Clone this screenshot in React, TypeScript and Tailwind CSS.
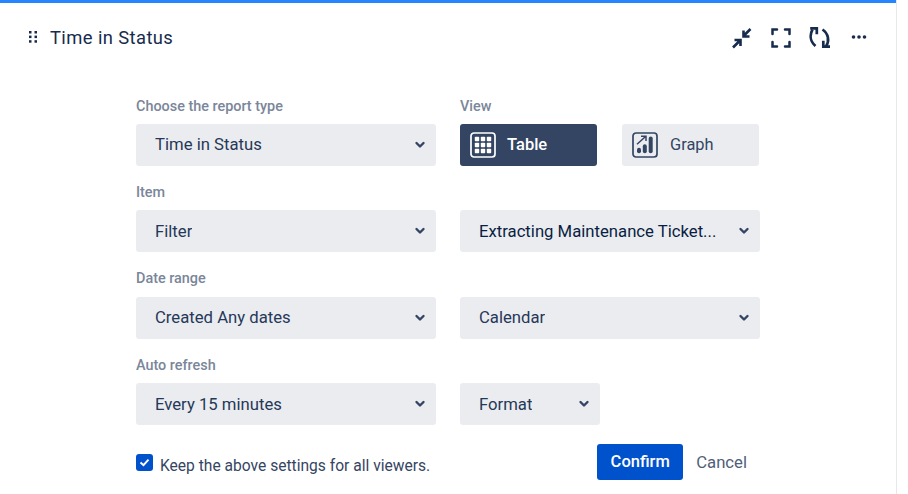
import React from 'react';

const ChevronIcon = () => (
  <svg width="12" height="8" viewBox="0 0 12 8" fill="none" className="shrink-0">
    <path d="M2.500 2l3.500 3.500L9.500 2" stroke="#344563" strokeWidth="2.400" strokeLinecap="round" strokeLinejoin="round" />
  </svg>
);

const SelectBox: React.FC<{ label: string; width: string; dark?: boolean; lifted?: boolean }> = ({ label, width, dark, lifted }) => (
  <div className={`${width} h-[42px] flex items-center justify-between bg-[#ebecf0] rounded-[3px] pl-[19px] pr-[10px]`}>
    <span className={`text-[16.7px] truncate ${lifted ? '' : 'pt-px'} ${dark ? 'text-[#091e42]' : 'text-[#253858]'}`}>{label}</span>
    <ChevronIcon />
  </div>
);

const Label: React.FC<{ children: React.ReactNode }> = ({ children }) => (
  <div className="h-[18px] mb-[9px] text-[14.4px] leading-[20px] font-medium text-[#7a869a]">{children}</div>
);

const DragHandle = () => (
  <svg width="10" height="14" viewBox="0 0 10 14" fill="#172b4d">
    <rect x="1" y="1" width="2.500" height="2.500" />
    <rect x="6.500" y="1" width="2.500" height="2.500" />
    <rect x="1" y="5.600" width="2.500" height="2.500" />
    <rect x="6.500" y="5.600" width="2.500" height="2.500" />
    <rect x="1" y="10.200" width="2.500" height="2.500" />
    <rect x="6.500" y="10.200" width="2.500" height="2.500" />
  </svg>
);

const CollapseIcon = () => (
  <svg width="22" height="22" viewBox="0 0 22 22" fill="none" stroke="#172b4d" strokeWidth="2.600">
    <path d="M19.500 2l-7 7M12.500 3.500v6h6" />
    <path d="M2 20.500l7-7M3.500 13h6v6" />
  </svg>
);

const FullscreenIcon = () => (
  <svg width="20" height="20" viewBox="0 0 20 20" fill="none" stroke="#172b4d" strokeWidth="2.500" strokeLinecap="round">
    <path d="M1.500 6V1.500H6M14 1.500h4.500V6M18.500 14v4.500H14M6 18.500H1.500V14" />
  </svg>
);

const RefreshIcon = () => (
  <svg width="22" height="22" viewBox="0 0 22 22" fill="none" stroke="#172b4d" strokeWidth="2.700">
    <path d="M6.500 19C1.200 14.500 0.500 8 3.500 2.500" />
    <path d="M1.200 1.300H7.800V7.200" />
    <path d="M13.500 2.500C19.300 6.500 20.800 13.500 17 19.500" />
    <path d="M21 19.700H14.300V13.800" />
  </svg>
);

const MoreIcon = () => (
  <svg width="16" height="4" viewBox="0 0 16 4" fill="#172b4d">
    <circle cx="2.500" cy="2" r="1.800" />
    <circle cx="8" cy="2" r="1.800" />
    <circle cx="13.500" cy="2" r="1.800" />
  </svg>
);

const TableIcon = () => (
  <svg width="26" height="26" viewBox="0 0 26 26" fill="none">
    <rect x="1" y="1" width="24" height="24" rx="3" stroke="#fff" strokeWidth="1.700" />
    {[4.800, 10.800, 16.800].map(y =>
      [4.800, 10.800, 16.800].map(x => <rect key={`${x}-${y}`} x={x} y={y} width="4.400" height="4.400" rx="0.800" fill="#fff" />)
    )}
  </svg>
);

const GraphIcon = () => (
  <svg width="26" height="26" viewBox="0 0 26 26" fill="none">
    <rect x="1" y="1" width="24" height="24" rx="3" stroke="#344563" strokeWidth="1.700" />
    <rect x="5" y="15.700" width="4" height="5.500" rx="2" fill="#344563" />
    <rect x="10.800" y="12.300" width="4" height="8.900" rx="2" fill="#344563" />
    <rect x="16.700" y="4.500" width="4" height="16.700" rx="2" fill="#344563" />
    <path d="M5 12.300l8.300-7.500M9 4.300h5V9" stroke="#344563" strokeWidth="1.500" />
  </svg>
);

const App: React.FC = () => {
  return (
    <div className="w-[908px] h-[494px] overflow-hidden bg-white font-['Roboto',sans-serif]">
      <div className="w-[897px] h-[494px] border-r border-[#e8e8ea]">
        <div className="h-[3px] bg-[#2684ff]" />

        <div className="h-[69px] flex items-center justify-between pl-[28px] pr-[29px]">
          <div className="flex items-center gap-[12px]">
            <DragHandle />
            <span className="text-[18.400px] tracking-[0.400px] text-[#172b4d] [font-weight:450]">Time in Status</span>
          </div>
          <div className="flex items-center gap-[18px]">
            <CollapseIcon />
            <FullscreenIcon />
            <RefreshIcon />
            <div className="ml-[2px] -mt-[2px]"><MoreIcon /></div>
          </div>
        </div>

        <div className="pl-[136px] pt-[25px]">
          <div className="flex gap-[24px]">
            <div>
              <Label>Choose the report type</Label>
              <SelectBox label="Time in Status" width="w-[300px]" lifted />
            </div>
            <div>
              <Label>View</Label>
              <div className="flex gap-[25px]">
                <div className="w-[137px] h-[42px] flex items-center gap-[11px] pl-[10px] rounded-[3px] bg-[#344563] text-white">
                  <TableIcon />
                  <span className="text-[16.500px] font-medium">Table</span>
                </div>
                <div className="w-[137px] h-[42px] flex items-center gap-[12px] pl-[10px] rounded-[3px] bg-[#ebecf0] text-[#344563]">
                  <GraphIcon />
                  <span className="text-[16.400px]">Graph</span>
                </div>
              </div>
            </div>
          </div>

          <div className="mt-[17px]">
            <Label>Item</Label>
            <div className="flex gap-[24px]">
              <SelectBox label="Filter" width="w-[300px]" />
              <SelectBox label="Extracting Maintenance Ticket..." width="w-[300px]" dark />
            </div>
          </div>

          <div className="mt-[17px]">
            <div className="pb-px">
              <Label>Date range</Label>
            </div>
            <div className="flex gap-[24px]">
              <SelectBox label="Created Any dates" width="w-[300px]" lifted />
              <SelectBox label="Calendar" width="w-[300px]" lifted />
            </div>
          </div>

          <div className="mt-[17px]">
            <Label>Auto refresh</Label>
            <div className="flex gap-[24px]">
              <SelectBox label="Every 15 minutes" width="w-[300px]" />
              <SelectBox label="Format" width="w-[140px]" />
            </div>
          </div>

          <div className="mt-[19px] w-[611px] flex items-center justify-between">
            <label className="flex items-center gap-[7px]">
              <span className="w-[17px] h-[17px] mt-[2px] rounded-[3px] bg-[#0052cc] flex items-center justify-center">
                <svg width="11" height="9" viewBox="0 0 11 9" fill="none">
                  <path d="M1.500 4.500l3 2.700 5-5.500" stroke="#fff" strokeWidth="2" />
                </svg>
              </span>
              <span className="text-[15.600px] pt-[10px] text-[#344563]">Keep the above settings for all viewers.</span>
            </label>
            <div className="flex items-center gap-[13px]">
              <button className="w-[86px] h-[36px] pt-px rounded-[3px] bg-[#0052cc] text-white text-[16.500px] font-medium">Confirm</button>
              <button className="text-[16.700px] pt-px text-[#505f79]">Cancel</button>
            </div>
          </div>
        </div>
      </div>
    </div>
  );
};

export default App;
